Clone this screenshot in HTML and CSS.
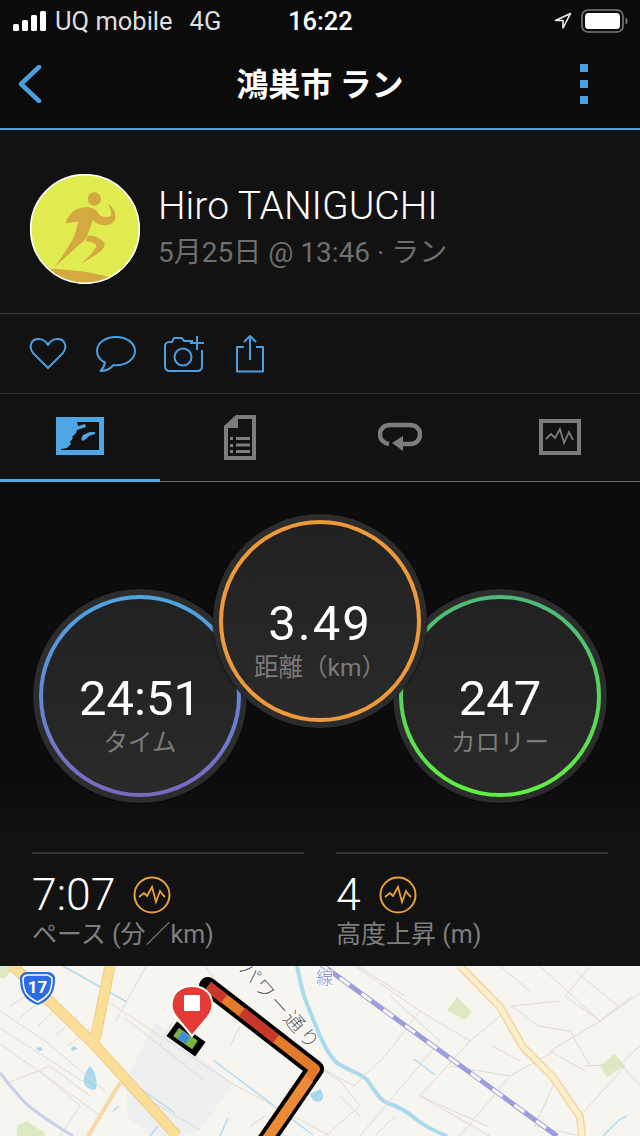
FILE: index.html
```html
<!DOCTYPE html>
<html lang="ja">
<head>
  <meta charset="UTF-8" />
  <meta name="viewport" content="width=device-width, initial-scale=1.0"/>
  <title>鴻巣市 ラン</title>
  <link rel="stylesheet" href="styles.css">
</head>
<body>

  <div class="status-bar">
    <div class="status-left">
      <svg class="signal" width="34" height="20" viewBox="0 0 34 20">
        <rect x="0" y="13" width="6" height="7" rx="1.5"/>
        <rect x="9" y="9" width="6" height="11" rx="1.5"/>
        <rect x="18" y="4" width="6" height="16" rx="1.5"/>
        <rect x="27" y="0" width="6" height="20" rx="1.5"/>
      </svg>
      <span class="carrier">UQ mobile</span>
      <span class="network">4G</span>
    </div>
    <div class="clock">16:22</div>
    <div class="status-right">
      <svg width="18" height="18" viewBox="0 0 18 18"><path d="M16.5 1.5 1.5 8.5h7.5v7.5z" fill="none" stroke="#f2f2f2" stroke-width="1.6" stroke-linejoin="round"/></svg>
      <svg width="47" height="24" viewBox="0 0 47 24">
        <rect x="1" y="1" width="41" height="22" rx="6" fill="none" stroke="#7a7a7a" stroke-width="1.6"/>
        <rect x="4" y="4" width="35" height="16" rx="3.5" fill="#fff"/>
        <path d="M44.500 8.500c1.600.5 2 2 2 3.500s-.4 3-2 3.500z" fill="#7a7a7a"/>
      </svg>
    </div>
  </div>

  <header class="title-bar">
    <svg class="back" width="24" height="38" viewBox="0 0 24 38"><path d="M21 2 3 19l18 17" fill="none" stroke="#4b9fdf" stroke-width="4.500" stroke-linecap="round" stroke-linejoin="round"/></svg>
    <h1>鴻巣市 ラン</h1>
    <div class="more"><i></i><i></i><i></i></div>
  </header>

  <section class="profile">
    <svg class="avatar" width="110" height="110" viewBox="90 42 330 330">
      <defs><clipPath id="av"><circle cx="255" cy="207" r="162"/></clipPath></defs>
      <circle cx="255" cy="207" r="163" fill="#e0ec4f"/>
      <g fill="#d4a93f" clip-path="url(#av)">
        <circle cx="283" cy="117" r="20"/>
        <path d="M198 186c8-24 28-42 56-44 20-2 36 6 44 22 8 8 24 8 34 4 4-8 0-22-8-36 14 8 24 24 22 42-2 14-20 24-36 22-14-2-24-8-32-16-6 22-14 42-22 58l-40 36-52 46c18-24 40-56 58-90 6-14 8-30 14-44-16 0-26 2-38 4z"/>
        <path d="M262 228c16-2 36 4 48 16 8 10 4 18-8 30-16 12-36 24-58 36 14-12 36-32 44-48 4-10-10-16-30-18z"/>
        <path d="M150 326c60 2 130 10 178 26l-40 40H130z"/>
      </g>
      <circle cx="255" cy="207" r="163" fill="none" stroke="#fff" stroke-width="5"/>
    </svg>
    <div class="who">
      <div class="name">Hiro TANIGUCHI</div>
      <div class="when">5月25日 @ 13:46 · ラン</div>
    </div>
  </section>

  <section class="actions">
    <svg width="38" height="33" viewBox="0 0 38 33"><path d="M19 31 4.500 16.500C-1 10 2 2 9.500 2c4.500 0 7.500 2.500 9.500 6 2-3.500 5-6 9.500-6C36 2 39 10 33.500 16.500z" class="line"/></svg>
    <svg width="42" height="38" viewBox="0 0 42 38"><path d="M21 2C10 2 2 8 2 16c0 5 3 9 8 11.500-.5 3-2 6-4.500 8.500 5 0 10-2.500 13-6 1 .2 1.500.2 2.500.2 11 0 19-6.500 19-14.200S32 2 21 2z" class="line"/></svg>
    <svg class="act-camera" width="42" height="38" viewBox="0 0 42 38"><path d="M30 6H21l-2-3H11L9 7H6.500C3.500 7 2 9 2 11v20c0 3 2 5 5 5h27c3 0 5-2 5-5V15" class="line"/><circle cx="20" cy="22" r="8.500" class="line"/><path d="M34 1v14M27 8h14" class="line"/></svg>
    <svg class="act-share" width="30" height="39" viewBox="0 0 30 39"><path d="M9 13H2v24.500h26V13h-7M15 26V2M9 8l6-6 6 6" class="line"/></svg>
  </section>

  <nav class="tabs">
    <div class="tab active">
      <svg width="48" height="38" viewBox="0 0 48 38">
        <path d="M0 0h48v38H0z" fill="#4ea6e6"/>
        <path d="M5 5h38v28H5z" fill="#111"/>
        <path d="M5 5h16l1 4 7-2 1 3-6 2-3 1-1 3-4 4 1 1-3 4 1 2-4 4-6 1z" fill="#4ea6e6"/>
        <path d="M25 22l2-4 7-3h5v2l-6 2-3 3-3 2z" fill="#4ea6e6"/>
      </svg>
    </div>
    <div class="tab">
      <svg width="32" height="45" viewBox="0 0 32 45">
        <path d="M12 0h20v45H0V11z" fill="#7c7c7c"/>
        <path d="M14 4h14v37H4V13h10z" fill="#111"/>
        <path d="M6 22h3v3H6zM6 29h3v3H6zM6 35h3v3H6zM12 22h14v3H12zM12 28.500h14v3H12zM12 35h14v3H12z" fill="#7c7c7c"/>
      </svg>
    </div>
    <div class="tab">
      <svg width="44" height="30" viewBox="0 0 44 30">
        <path d="M11 22C5 21 2 17 2 12.500 2 7 6 3 12 3h20c6 0 10 4 10 9.500S38 22 32 22H22" fill="none" stroke="#7c7c7c" stroke-width="4.500"/>
        <path d="M25 14v15l-11-8z" fill="#7c7c7c"/>
      </svg>
    </div>
    <div class="tab">
      <svg width="42" height="36" viewBox="0 0 42 36">
        <path d="M2 2h38v32H2z" fill="none" stroke="#7c7c7c" stroke-width="4"/>
        <path d="M7 20l5-5 4 4 5-9 4 14 5-11 4 8" fill="none" stroke="#7c7c7c" stroke-width="1.800"/>
      </svg>
    </div>
  </nav>

  <section class="stats">
    <div class="rings">
      <div class="metric">
        <div class="ring ring-blue"><div class="face">
          <div class="big">24:51</div>
          <div class="small">タイム</div>
        </div></div>
      </div>
      <div class="metric metric-top">
        <div class="ring ring-orange"><div class="face">
          <div class="big">3.49</div>
          <div class="small">距離（km）</div>
        </div></div>
      </div>
      <div class="metric">
        <div class="ring ring-green"><div class="face">
          <div class="big">247</div>
          <div class="small">カロリー</div>
        </div></div>
      </div>
    </div>

    <div class="details">
      <div class="detail">
        <div class="detail-top">
          <span class="detail-val">7:07</span>
          <svg class="gauge" width="38" height="38" viewBox="0 0 38 38"><circle cx="19" cy="19" r="17.500"/><path d="M6 21l5-4 3 3 5-9 4 15 4-11 2 3 3 3"/></svg>
        </div>
        <div class="detail-label">ペース (分／km)</div>
      </div>
      <div class="detail">
        <div class="detail-top">
          <span class="detail-val">4</span>
          <svg class="gauge" width="38" height="38" viewBox="0 0 38 38"><circle cx="19" cy="19" r="17.500"/><path d="M6 21l5-4 3 3 5-9 4 15 4-11 2 3 3 3"/></svg>
        </div>
        <div class="detail-label">高度上昇 (m)</div>
      </div>
    </div>
  </section>

  <svg class="map" width="640" height="170" viewBox="0 0 640 170">
    <rect width="640" height="170" fill="#f7f5ef"/>

    <!-- blocks -->
    <path class="block" d="M127 113 155 56 233 118 200 164 180 170 150 170 127 150z"/>
    <path class="park" d="M0 0h16L5 12H0zM17 160l10-5 18 12v3H17zM457 31l15 15-7 8-18-10zM615 88l10 12-18 11-7-11z"/>

    <!-- water -->
    <path class="water w4" d="M297 0c3 14 5 26 10 38 10 25 18 48 30 59 12 8 24 10 30 17 7 9 12 20 20 23 10 3 20 8 30 17 8 6 20 12 30 16"/>
    <path class="water" d="M63 0 127 36M127 113 175 147M113 145l6-5M213 94 313 169M414 93 435 109M603 170l16-16 8-4M150 170l8-10M220 170l8-18"/>
    <path class="pond" d="M90 100c-5 6-7 12-6 17 2 5 8 8 12 6 2-8-1-18-6-23zM78 83l-4-3-3 2 1 3zM36 82l5-1 2 3-4 1zM310 128c2 8 8 10 12 6 2-3 1-8-2-11z"/>

    <!-- minor roads -->
    <path class="minor" d="M0 45 45 75 105 125M0 62 90 120M0 78 60 120 100 150M10 40 35 25M30 30 60 48M20 52 45 30M38 60 62 38M55 70 78 50M68 80 90 62M5 118 50 100 90 130M40 105 80 140 60 170M110 37 233 118M146 0l-30 55M125 52 205 115M172 56 160 80M205 0l30 40M240 60l-10 20M120 117 200 164M233 118 330 170M300 130l-15 20M250 160l15-10 20 20"/>
    <path class="minor" d="M355 0 420 45 385 90 354 120 300 90M358 0 405 30M390 30 440 75 360 170M420 45 470 75 420 130 490 170M470 75 512 40 560 35M450 100 510 110 555 85M492 80 520 95M512 40 538 60 570 65 590 100M500 0 530 25M540 0 600 55 650 20M590 0 565 30 600 55M600 55 550 85 585 105M585 100 620 98 650 130M575 5 618 40M632 30 600 55M420 130 487 160M510 110 460 170M555 115 535 160 580 170M620 98 640 80M625 100 580 150M340 130 360 150M300 90 340 115 360 140 325 170M395 150 375 170"/>

    <!-- main roads -->
    <path class="road-edge" d="M13 0 93 77 177 170M110 0 95 74"/>
    <path class="road" d="M13 0 93 77 177 170M110 0 95 74"/>
    <path class="road-thin" d="M120 117 88 170"/>
    <path class="road2-edge" d="M460 0 500 41 523 81 553 111 580 151 582 170"/>
    <path class="road2" d="M460 0 500 41 523 81 553 111 580 151 582 170"/>

    <!-- rail -->
    <path class="rail" d="M318-4 557 170"/>
    <path class="rail-dash" d="M318-4 557 170"/>
    <path class="ghost" d="M0 107c10 12 20 26 30 34 14 11 28 20 43 29"/>

    <!-- labels -->
    <text class="map-label" transform="translate(238 4) rotate(48)">パワー通り</text>
    <text class="map-label map-rail" x="316" y="18">線</text>

    <!-- route -->
    <path class="route-bg" d="M208 20 315 103 265 176"/>
    <path class="route-bg small-bg" d="M179 68 193 78"/>
    <path class="route o1" d="M208 20 315 103 265 176"/>
    <path class="route r1" d="M208 20 224 33M242 46 276 73"/>
    <path class="route o2" d="M309 113 265 176"/>
    <path class="route g1" d="M176 66 195 79"/>
    <path class="route b1" d="M180 69 188 74"/>

    <!-- shield -->
    <path class="shield" d="M27 6h21c3 0 6 2 7 5 0 5 0 12-4 18-3 5-8 8-13 10-6-2-11-5-14-10-4-6-4-13-4-18 1-3 4-5 7-5z"/>
    <path class="shield shield-in" d="M28 9h19c2 0 4 2 5 3 0 5 0 10-3 15-3 4-7 7-11 9-5-2-9-5-12-9-3-5-3-10-3-15 1-2 3-3 5-3z"/>
    <text class="shield-text" x="37.500" y="27">17</text>

    <!-- pin -->
    <path class="pin" d="M192 70 177 52C170 44 171 35 174 29c4-6 10-9 18-9s14 3 18 9c3 6 4 15-3 23z"/>
    <rect x="184" y="29" width="16" height="16" fill="#fff"/>
  </svg>

</body>
</html>
```

FILE: styles.css
```css
* {margin:0; padding:0; box-sizing:border-box;}
body {
  font-family: Roboto, "Noto Sans CJK JP", sans-serif;
  font-weight: 300;
  background: #111;
  color: #fff;
  width: 640px;
  height: 1136px;
  overflow: hidden;
}

.status-bar {
  height: 42px;
  background: #0b0b0b;
  display: flex;
  align-items: center;
  justify-content: space-between;
  padding: 0 12px 0 13px;
  position: relative;
  font-size: 25.500px;
  font-weight: 400;
  color: #dedede;
}

.status-left {display: flex; align-items: center; gap: 8px;}
.signal rect {fill: #fff;}
.network {margin-left: 9px;}
.clock {position: absolute; left: 288px; color: #fff; font-weight: 500;}
.status-right {display: flex; align-items: center; gap: 9px;}

.title-bar {
  height: 88px;
  background: #0b0b0b;
  border-bottom: 2px solid #4b9fdf;
  display: flex;
  align-items: center;
  justify-content: space-between;
  padding: 0 52px 2px 18px;
  position: relative;
}

.title-bar h1 {
  position: absolute;
  left: 0;
  right: 0;
  top: 20px;
  text-align: center;
  font-size: 32px;
  font-weight: 700;
  font-family: "Noto Sans CJK JP", sans-serif;
  line-height: 40px;
}

.more {display: flex; flex-direction: column; gap: 8px;}
.more i {display: block; width: 8px; height: 8px; background: #4b9fdf;}

.profile {
  height: 184px;
  border-bottom: 1px solid #3a3a3a;
  display: flex;
  align-items: center;
  padding: 15px 0 0 30px;
  gap: 18px;
  background: #121212;
}

.name {font-size: 39px; line-height: 44px;}
.when {font-size: 28px; line-height: 44px; margin-top: 3px; color: #6e6e6e; font-weight: 400;}

.actions {
  height: 80px;
  border-bottom: 1px solid #2e2e2e;
  display: flex;
  align-items: center;
  padding: 0 0 0 29px;
  gap: 28px;
  background: #121212;
}

.act-camera {margin-left: -2px;}
.act-share {margin-left: 2px;}

.line {fill: none; stroke: #4b9fdf; stroke-width: 2; stroke-linejoin: round;}

.tabs {
  height: 88px;
  display: flex;
  border-bottom: 1px solid #6a6a6a;
  background: #121212;
}

.tab {
  flex: 1;
  display: flex;
  align-items: center;
  justify-content: center;
  padding-bottom: 1px;
}

.tab.active {
  border-bottom: 3px solid #4ea6e6;
  margin-bottom: -1px;
  padding-top: 0;
}

.stats {
  height: 484px;
  padding-top: 32px;
  background: linear-gradient(#0c0c0c 0, #0c0c0c 300px, #121212 370px);
}

.rings {
  display: flex;
  justify-content: center;
  align-items: flex-end;
  height: 289px;
}

.metric {
  width: 214px;
  height: 214px;
  border-radius: 50%;
  background: #2c2c2c;
  padding: 6px;
  flex: none;
  box-shadow: 0 0 2px #000;
}

.metric-top {
  position: relative;
  z-index: 2;
  margin: 0 -34px 75px;
}

.ring {
  width: 100%;
  height: 100%;
  border-radius: 50%;
  padding: 4px;
}

.ring-blue {background: linear-gradient(#4ca5e0, #7a68c0);}
.ring-orange {background: #ee9a3a;}
.ring-green {background: linear-gradient(#4cb87a, #60f040);}

.face {
  width: 100%;
  height: 100%;
  border-radius: 50%;
  background: linear-gradient(#212121, #2a2a2a);
  display: flex;
  flex-direction: column;
  align-items: center;
  justify-content: center;
  padding-top: 38px;
}

.big {font-size: 49px; line-height: 56px; font-weight: 400;}
.metric-top .big {letter-spacing: 2px;}
.small {font-size: 24.500px; line-height: 32px; color: #7b7b7b; font-weight: 400;}

.details {
  display: flex;
  gap: 32px;
  padding: 0 32px;
  margin-top: 49px;
}

.detail {
  flex: 1;
  border-top: 2px solid #363636;
  padding-top: 17px;
}

.detail-top {display: flex; align-items: center; gap: 18px; height: 48px;}
.detail-val {font-size: 44.500px; line-height: 48px; font-weight: 300;}
.detail-label {font-size: 25px; line-height: 32px; color: #7e7e7e; font-weight: 400;}

.gauge circle, .gauge path {fill: none; stroke: #e89f3c; stroke-width: 2;}
.gauge path {stroke-width: 1.800;}

.map {display: block; font-family: "Noto Sans CJK JP", sans-serif;}
.map path {fill: none;}
.map .block {fill: #eef0f0;}
.map .park {fill: #dde9c2;}
.map .pond {fill: #a8d8ee;}
.map .water {stroke: #b3dcee; stroke-width: 1.500;}
.map .w4 {stroke: #aadaec; stroke-width: 4;}
.map .minor {stroke: #dddbd4; stroke-width: 1;}
.map .road-edge {stroke: #f2c97e; stroke-width: 11;}
.map .road {stroke: #fbdf98; stroke-width: 9;}
.map .road-thin {stroke: #f6d9a6; stroke-width: 4;}
.map .road2-edge {stroke: #f3d4a2; stroke-width: 8;}
.map .road2 {stroke: #fdf0cc; stroke-width: 5;}
.map .rail {stroke: #9c9edc; stroke-width: 5;}
.map .rail-dash {stroke: #fff; stroke-width: 3; stroke-dasharray: 12 15;}
.map .ghost {stroke: #c8d2ea; stroke-width: 3;}
.map .route-bg {stroke: #000; stroke-width: 18; stroke-linejoin: round; stroke-linecap: round;}
.map .small-bg {stroke-linecap: square; stroke-linejoin: miter;}
.map .route {stroke-width: 10;}
.map .o1 {stroke: #e27b2a; stroke-linejoin: round;}
.map .o2 {stroke: #ec8b36;}
.map .r1 {stroke: #c8372c;}
.map .g1 {stroke: #7ab33e;}
.map .b1 {stroke: #3f8edb; stroke-width: 9;}
.map .shield {fill: #2b6de0;}
.map .shield-in {stroke: #fff; stroke-width: 1.500;}
.map .pin {fill: #e53a35; stroke: #fff; stroke-width: 2;}

.map-label {
  font-size: 20px;
  letter-spacing: 2px;
  fill: #5f5f5f;
  stroke: #fff;
  stroke-width: 2px;
  paint-order: stroke;
}

.map-rail {fill: #7f82d4; font-size: 17px;}

.shield-text {
  font-family: Roboto, sans-serif;
  font-size: 17px;
  font-weight: 700;
  fill: #fff;
  text-anchor: middle;
}
```
